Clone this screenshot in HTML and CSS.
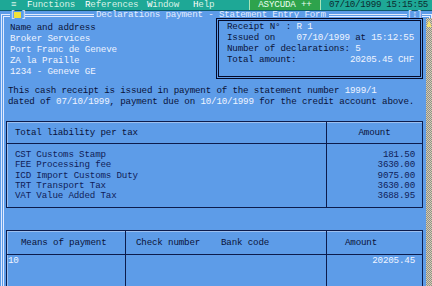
FILE: index.html
```html
<!DOCTYPE html>
<html>
<head>
<meta charset="utf-8">
<link rel="stylesheet" href="styles.css">
</head>
<body>
<div class="screen">
  <div class="menubar">
    <span class="sys">≡</span>
    <span class="mi m1"><b>F</b>unctions</span>
    <span class="mi m2"><b>R</b>eferences</span>
    <span class="mi m3"><b>W</b>indow</span>
    <span class="mi m4"><b>H</b>elp</span>
    <span class="brand">ASYCUDA ++</span>
    <span class="clock">07/10/1999 15:15:55</span>
  </div>
  <div class="window">
    <div class="titlebar">
      <span class="tl"></span>
      <span class="close"><span>[</span><i></i><span>]</span></span>
      <span class="rule r1"></span>
      <span class="title">Declarations payment - Statement Entry Form</span>
      <span class="rule r2"></span>
      <span class="zoombtn">[↕]</span>
      <span class="rule r3"></span>
      <span class="tr"></span>
    </div>
    <div class="frame">
      <div class="content">
        <div class="top">
          <div class="address">
            <div class="ln">Name and address</div>
            <div class="ln val">Broker Services</div>
            <div class="ln val">Port Franc de Geneve</div>
            <div class="ln val">ZA la Praille</div>
            <div class="ln val">1234 - Geneve GE</div>
          </div>
          <div class="receipt">
            <div class="ln">Receipt N° : <span class="val">R 1</span></div>
            <div class="ln">Issued on    <span class="val">07/10/1999</span> at <span class="val">15:12:55</span></div>
            <div class="ln">Number of declarations: <span class="val">5</span></div>
            <div class="ln">Total amount:          <span class="val">20205.45 CHF</span></div>
          </div>
        </div>
        <div class="statement">
          <div class="ln">This cash receipt is issued in payment of the statement number <span class="val">1999/1</span></div>
          <div class="ln">dated of <span class="val">07/10/1999</span>, payment due on <span class="val">10/10/1999</span> for the credit account above.</div>
        </div>
        <div class="tbl tax">
          <div class="th c1">Total liability per tax</div>
          <div class="th c2">Amount</div>
          <div class="td c1">
            <div class="ln">CST Customs Stamp</div>
            <div class="ln">FEE Processing fee</div>
            <div class="ln">ICD Import Customs Duty</div>
            <div class="ln">TRT Transport Tax</div>
            <div class="ln">VAT Value Added Tax</div>
          </div>
          <div class="td c2">
            <div class="ln">181.50</div>
            <div class="ln">3630.00</div>
            <div class="ln">9075.00</div>
            <div class="ln">3630.00</div>
            <div class="ln">3688.95</div>
          </div>
        </div>
        <div class="tbl pay">
          <div class="th p1">Means of payment</div>
          <div class="th p2">Check number</div>
          <div class="th p3">Bank code</div>
          <div class="th p4">Amount</div>
          <div class="td p1 val">10</div>
          <div class="td p2"></div>
          <div class="td p3"></div>
          <div class="td p4 val">20205.45</div>
        </div>
      </div>
      <div class="scrollbar"><span class="arrow"></span></div>
    </div>
  </div>
</div>
</body>
</html>
```
FILE: styles.css
```css
* { box-sizing: border-box; margin: 0; padding: 0; }
html, body { width: 432px; height: 286px; overflow: hidden; }
body {
  background: #5d9ce8;
  font-family: "Liberation Mono", "DejaVu Sans Mono", monospace;
  font-size: 9.2px;
  letter-spacing: -0.17px;
  color: #0a1238;
}
.screen { width: 432px; height: 286px; display: flex; flex-direction: column; overflow: hidden; }

.menubar {
  height: 11px;
  flex: 0 0 11px;
  background: #1ea896;
  border-bottom: 1px solid #0e5a6a;
  display: flex;
  align-items: stretch;
  line-height: 10px;
  color: #d8f2e6;
  white-space: nowrap;
  padding-left: 11px;
}
.menubar b { font-weight: normal; color: #ffffff; }
.sys { width: 16px; }
.m1 { width: 58px; }
.m2 { width: 62px; }
.m3 { width: 46px; }
.m4 { width: 56px; }
.brand {
  width: 72px;
  text-align: center;
  background: #2ea34c;
  border-left: 1px solid #a8e4b8;
  border-right: 1px solid #a8e4b8;
  color: #e8fff0;
}
.clock { margin-left: 8px; color: #0c2c30; letter-spacing: -0.3px; }

.window { flex: 1; display: flex; flex-direction: column; min-height: 0; }
.titlebar {
  height: 7px;
  flex: 0 0 7px;
  display: flex;
  color: #e4ecff;
  line-height: 7px;
  white-space: nowrap;
}
.rule, .tl, .tr {
  align-self: flex-end;
  height: 4px;
  border-top: 3px double #e4ecff;
}
.tl { margin-left: 1px; width: 9px; border-left: 3px double #e4ecff; }
.tr { width: 4px; border-right: 3px double #e4ecff; }
.close { width: 15px; display: flex; align-items: center; }
.close span { display: block; width: 4px; }
.close i { display: block; width: 7px; height: 6px; background: #f2e23a; }
.r1 { width: 69px; }
.title { margin: 0 3px 0 2px; }
.r2 { flex: 1; }
.zoombtn { width: 15px; letter-spacing: -0.6px; }
.r3 { width: 6px; }

.frame {
  flex: 1;
  display: flex;
  min-height: 0;
  margin-left: 1px;
  border-left: 3px double #dfe9ff;
}
.content { flex: 1; display: flex; flex-direction: column; min-width: 0; min-height: 0; }
.ln { white-space: pre; }
.val { color: #f0f4ff; }

.top { display: flex; height: 61px; flex: 0 0 61px; }
.address { padding: 3.5px 0 0 6px; line-height: 11px; }
.receipt {
  margin-left: auto;
  margin-right: 3px;
  width: 207px;
  border: 3px double #050a28;
  padding-left: 8px;
  line-height: 11px;
}

.statement { margin-top: 7px; padding-left: 4px; line-height: 10.5px; margin-bottom: 14px; flex: 0 0 auto; }

.tbl {
  margin: 0 3px 0 2px;
  border: 1px solid #0c1c4c;
  box-shadow: inset 1px 1px 0 #9cc0f0;
  display: grid;
}
.tax { grid-template-columns: 319px 1fr; grid-template-rows: 22px 1fr; height: 87px; flex: 0 0 87px; }
.th { border-bottom: 1px solid #0c1c4c; line-height: 21px; color: #0a1238; white-space: nowrap; }
.tax .c1 { padding-left: 8px; }
.tax .c2 { border-left: 1px solid #0c1c4c; }
.tax .th.c2 { text-align: center; }
.tax .td { padding-top: 6px; line-height: 10.3px; color: #101c58; }
.tax .td.c2 { text-align: right; padding-right: 7px; }

.pay {
  margin-top: 22px;
  flex: 1 1 auto;
  min-height: 0;
  grid-template-columns: 118px 90px 111px 1fr;
  grid-template-rows: 24px 1fr;
  border-bottom: none;
}
.pay .th { line-height: 23px; }
.pay .p1 { padding-left: 14px; }
.pay .p2 { padding-left: 10px; border-left: 1px solid #0c1c4c; }
.pay .p3 { padding-left: 6px; }
.pay .p4 { padding-left: 18px; border-left: 1px solid #0c1c4c; }
.pay .td { line-height: 12px; }
.pay .td.p1 { padding-left: 1px; }
.pay .td.p4 { text-align: right; padding-right: 7px; padding-left: 0; }

.scrollbar {
  width: 6px;
  flex: 0 0 6px;
  background: repeating-conic-gradient(#d6ceb0 0 25%, #8e8e8a 0 50%) 0 0 / 2px 2px;
  display: flex;
  justify-content: center;
  align-items: flex-start;
  padding-top: 2px;
}
.arrow {
  display: block;
  width: 5px;
  height: 7px;
  background: #f2e070;
  clip-path: polygon(50% 0, 100% 100%, 0 100%);
}
```
